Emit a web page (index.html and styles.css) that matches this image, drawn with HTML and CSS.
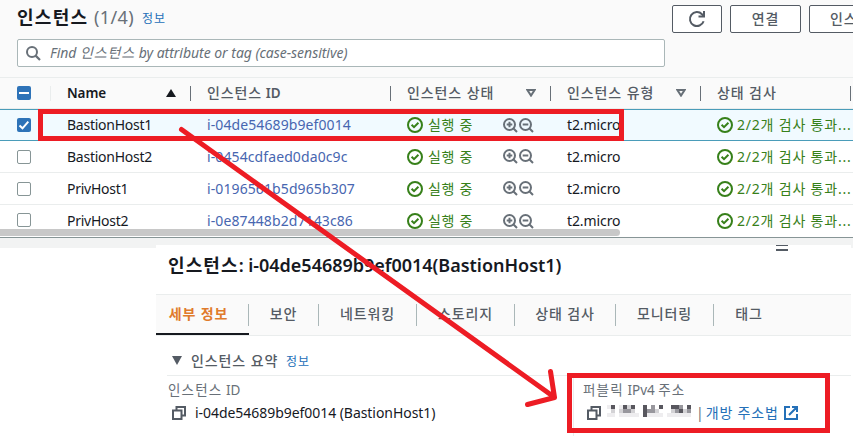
FILE: index.html
```html
<!DOCTYPE html>
<html lang="ko">
<head>
<meta charset="utf-8">
<title>인스턴스</title>
<link rel="stylesheet" href="styles.css">
</head>
<body>
<svg class="defs" width="0" height="0">
  <symbol id="ok" viewBox="0 0 16 16"><circle cx="8" cy="8" r="7" fill="none" stroke="#37801a" stroke-width="2"/><path d="M4.6 7.8 7 10.2 11.4 5.8" fill="none" stroke="#37801a" stroke-width="2"/></symbol>
  <symbol id="zin" viewBox="0 0 15 15"><circle cx="6.5" cy="6.5" r="5.5" fill="none" stroke="#687078" stroke-width="2"/><path d="M10.3 10.3 14 14M3.7 6.5h5.6M6.5 3.7v5.6" fill="none" stroke="#687078" stroke-width="2"/></symbol>
  <symbol id="zout" viewBox="0 0 15 15"><circle cx="6.5" cy="6.5" r="5.5" fill="none" stroke="#687078" stroke-width="2"/><path d="M10.3 10.3 14 14M3.7 6.5h5.6" fill="none" stroke="#687078" stroke-width="2"/></symbol>
  <symbol id="copy" viewBox="0 0 14 14"><path d="M1 4.5h8.5V13H1zM4.5 4V1H13v8.5h-3" fill="none" stroke="#545b64" stroke-width="2"/></symbol>
</svg>
<div class="screen">
  <section class="list">
    <header class="top">
      <h1><span class="t1">인스턴스</span><span class="count">(1/4)</span><span class="info">정보</span></h1>
      <div class="buttons">
        <div class="btn refresh"><svg width="18" height="18" viewBox="0 0 18 18"><path d="M15.6 11.2A7 7 0 1 1 14 4.2L16 6.2" fill="none" stroke="#545b64" stroke-width="2"/><path d="M16 1v5.5h-5.5" fill="none" stroke="#545b64" stroke-width="2"/></svg></div>
        <div class="btn connect">연결</div>
        <div class="btn state">인스턴스 상태</div>
      </div>
    </header>
    <div class="search">
      <svg width="15" height="15" viewBox="0 0 15 15"><circle cx="6" cy="6" r="5" fill="none" stroke="#687078" stroke-width="2"/><path d="M9.6 9.6 14 14" stroke="#687078" stroke-width="2.2"/></svg>
      <span class="placeholder">Find <span class="ks">인스턴스</span> by attribute or tag (case-sensitive)</span>
    </div>
    <div class="row head">
      <div class="check"><i class="box on"><svg width="14" height="14"><path d="M2 7h10" stroke="#fff" stroke-width="2"/></svg></i></div>
      <div class="cell name"><b>Name</b><svg width="10" height="8"><path d="M5 0 10 8H0z" fill="#16191f"/></svg></div>
      <div class="cell id"><span><span class="ko">인스턴스</span> <b>ID</b></span></div>
      <div class="cell status"><span class="ko">인스턴스 상태</span><svg width="10" height="8"><path d="M1.4 1h7.2L5 6.600z" fill="none" stroke="#687078" stroke-width="2"/></svg></div>
      <div class="cell type"><span class="ko">인스턴스 유형</span><svg width="10" height="8"><path d="M1.4 1h7.2L5 6.600z" fill="none" stroke="#687078" stroke-width="2"/></svg></div>
      <div class="cell test"><span class="ko">상태 검사</span></div>
    </div>
    <div class="row selected">
      <div class="check"><i class="box on"><svg width="14" height="14"><path d="M2.5 7.5 5.5 10.3 11.3 3.7" fill="none" stroke="#fff" stroke-width="2"/></svg></i></div>
      <div class="cell name">BastionHost1</div><div class="cell id">i-04de54689b9ef0014</div>
      <div class="cell status"><svg width="16" height="16"><use href="#ok"/></svg><span class="run">실행 중</span><svg class="z" width="15" height="15"><use href="#zin"/></svg><svg width="15" height="15"><use href="#zout"/></svg></div>
      <div class="cell type">t2.micro</div><div class="cell test"><svg width="16" height="16"><use href="#ok"/></svg><span class="pass">2/2개 검사 통과...</span></div>
    </div>
    <div class="row">
      <div class="check"><i class="box"></i></div>
      <div class="cell name">BastionHost2</div><div class="cell id">i-0454cdfaed0da0c9c</div>
      <div class="cell status"><svg width="16" height="16"><use href="#ok"/></svg><span class="run">실행 중</span><svg class="z" width="15" height="15"><use href="#zin"/></svg><svg width="15" height="15"><use href="#zout"/></svg></div>
      <div class="cell type">t2.micro</div><div class="cell test"><svg width="16" height="16"><use href="#ok"/></svg><span class="pass">2/2개 검사 통과...</span></div>
    </div>
    <div class="row">
      <div class="check"><i class="box"></i></div>
      <div class="cell name">PrivHost1</div><div class="cell id">i-0196561b5d965b307</div>
      <div class="cell status"><svg width="16" height="16"><use href="#ok"/></svg><span class="run">실행 중</span><svg class="z" width="15" height="15"><use href="#zin"/></svg><svg width="15" height="15"><use href="#zout"/></svg></div>
      <div class="cell type">t2.micro</div><div class="cell test"><svg width="16" height="16"><use href="#ok"/></svg><span class="pass">2/2개 검사 통과...</span></div>
    </div>
    <div class="row last">
      <div class="check"><i class="box"></i></div>
      <div class="cell name">PrivHost2</div><div class="cell id">i-0e87448b2d7143c86</div>
      <div class="cell status"><svg width="16" height="16"><use href="#ok"/></svg><span class="run">실행 중</span><svg class="z" width="15" height="15"><use href="#zin"/></svg><svg width="15" height="15"><use href="#zout"/></svg></div>
      <div class="cell type">t2.micro</div><div class="cell test"><svg width="16" height="16"><use href="#ok"/></svg><span class="pass">2/2개 검사 통과...</span></div>
    </div>
    <div class="track"><div class="thumb"></div></div>
  </section>
  <section class="detail">
    <div class="grip"></div>
    <h2><span class="h2ko">인스턴스</span>: i-04de54689b9ef0014(BastionHost1)</h2>
    <nav class="tabs">
      <div class="tab active">세부 정보</div><div class="tab w70">보안</div><div class="tab w98">네트워킹</div><div class="tab w98">스토리지</div><div class="tab w101">상태 검사</div><div class="tab w98">모니터링</div><div class="tab w70">태그</div>
    </nav>
    <div class="summary"><svg width="10" height="9"><path d="M0 0h10L5 9z" fill="#545b64"/></svg><span class="sum">인스턴스 요약</span><span class="info">정보</span></div>
    <div class="fields">
      <div class="field first">
        <div class="label"><span class="lk">인스턴스</span> ID</div>
        <div class="value"><svg width="14" height="14"><use href="#copy"/></svg><span class="iid">i-04de54689b9ef0014 (BastionHost1)</span></div>
      </div>
      <div class="field second">
        <div class="label"><span class="lk">퍼블릭</span> IPv4 <span class="lk">주소</span></div>
        <div class="value"><svg width="14" height="14"><use href="#copy"/></svg>
          <svg class="mosaic" width="86" height="12" shape-rendering="crispEdges">
            <path fill="#eeedef" d="M0 0h4v4H0zM12 0h4v4h-4zM0 8h8v4H0zM12 8h20v4H12zM40 8h16v4H40zM60 8h24v4H60z"/>
            <path fill="#d3d2d5" d="M4 4h4v4H4zM12 4h4v4h-4zM24 4h4v4h-4zM48 4h4v4h-4zM64 4h4v4h-4zM76 4h4v4h-4zM20 0h4v4h-4z"/>
            <path fill="#98979d" d="M16 4h8v4h-8zM40 4h8v4h-8zM68 4h4v4h-4zM44 0h4v4h-4zM72 0h4v4h-4zM80 4h4v4h-4z"/>
            <path fill="#58575e" d="M4 0h4v4H4zM16 0h4v4h-4zM24 0h4v4h-4zM36 0h4v12h-4zM52 0h4v4h-4zM64 0h8v4h-8zM80 0h4v4h-4zM72 4h4v4h-4z"/>
          </svg>
          <span class="bar">|</span><span class="open">개방 주소법</span>
          <svg width="14" height="14" viewBox="0 0 14 14"><path d="M6 1H1v12h12V8M8 1h5v5M13 1 5 9" fill="none" stroke="#2470b8" stroke-width="2"/></svg>
        </div>
      </div>
    </div>
  </section>
</div>
<svg class="marks" width="859" height="439" fill="none" stroke="#ed1c24" stroke-width="5">
  <path d="M40.500 111.500H621.500V138.500H40.500z M569.500 375.500H827.500V430.500H569.500z"/>
  <path d="M181.500 129.500 554 397 M550.500 371.500 554.500 397.500 527.500 404.500" stroke-linecap="round" stroke-linejoin="round"/>
</svg>
</body>
</html>
```
FILE: styles.css
```css
* { box-sizing: border-box; }
body { margin: 0; width: 859px; height: 439px; overflow: hidden; position: relative; background: #fff; color: #16191f; font: 14px/20px "Noto Sans", "Noto Sans CJK KR", sans-serif; }
svg { flex: none; display: block; }
.defs { position: absolute; }
.screen { width: 853px; height: 439px; overflow: hidden; }
.list { height: 248px; background: linear-gradient(#fafafa 0 109px, #fff 109px 237px, #879596 237px 238px, #f2f3f3 238px); }
.top { height: 39px; display: flex; justify-content: space-between; background: #fafafa; }
h1 { margin: 0; padding: 3px 0 0 17px; font-size: 18px; line-height: 28px; display: flex; white-space: nowrap; }
.t1 { letter-spacing: 1.3px; width: 77px; }
.count { font-weight: 400; color: #687078; width: 48px; letter-spacing: .4px; }
.info { font-size: 12px; font-weight: 400; color: #2470b8; letter-spacing: .9px; padding-top: 2px; }
.buttons { display: flex; width: 181px; gap: 8px; padding-top: 5px; overflow: hidden; }
.btn { flex: none; height: 28px; border: 1px solid #545b64; border-radius: 2px; background: #fff; color: #545b64; font-weight: 500; line-height: 25px; text-align: center; letter-spacing: .8px; white-space: nowrap; }
.refresh { width: 50px; display: flex; align-items: center; justify-content: center; }
.connect { width: 71px; }
.state { width: 120px; text-align: left; padding-left: 20px; }
.search { width: 648px; height: 28px; margin-left: 17px; border: 1px solid #aab7b8; border-radius: 2px; background: #fff; display: flex; align-items: center; padding-left: 8px; gap: 9px; }
.placeholder { color: #687078; font-style: italic; font-size: 14px; letter-spacing: -.03px; white-space: nowrap; }
.ks { letter-spacing: .9px; }
.row { height: 32px; display: grid; grid-template-columns: 50px 140px 200px 160px 150px 151px; align-items: center; border-bottom: 1px solid #eaeded; white-space: nowrap; }
.head { height: 32px; margin-top: 10px; border-top: 1px solid #eaeded; color: #545b64; }
.row.selected { background: #f1faff; border-top: 1px solid #4a9cb9; border-bottom: 1px solid #4a9cb9; }
.row.last { height: 24px; align-items: start; border: 0; padding-top: 6px; overflow: hidden; }
.row.last .check { padding-top: 2px; }
.check { padding-left: 17px; }
.box { display: block; width: 14px; height: 14px; border: 1px solid #879596; border-radius: 2px; background: #fff; }
.box.on { border: 0; background: #2e73b8; }
.cell { padding-left: 17px; display: flex; align-items: center; }
.head .cell { height: 15px; border-left: 1px solid #687078; padding-left: 16px; }
.head .name { border-color: #eaeded; color: #16191f; justify-content: space-between; padding-right: 14px; }
.head .test { border-right: 1px solid #687078; }
.head .status, .head .type { justify-content: space-between; padding-right: 14px; }
.head b { font-size: 13.5px; font-weight: 600; letter-spacing: -.1px; }
.ko { letter-spacing: .9px; font-weight: 500; }
.row:not(.head) .name { letter-spacing: -.25px; }
.row:not(.head) .type { letter-spacing: -.1px; }
.row:not(.head) .id { color: #4766b0; letter-spacing: .1px; }
.run { color: #37801a; letter-spacing: .7px; width: 80px; padding-left: 5px; }
.pass { color: #37801a; letter-spacing: .8px; padding-left: 4px; }
.status svg + svg { margin-left: 1px; }
.track { height: 7px; }
.thumb { width: 620px; height: 7px; background: #c8c8c8; border-radius: 0 4px 4px 0; }
.detail { width: 695px; height: 194px; margin: -3px 0 0 156px; background: #fff; position: relative; }
.grip { position: absolute; left: 620px; top: 0; width: 12px; height: 6px; border-top: 1px solid #545b64; border-bottom: 2px solid #545b64; }
h2 { margin: 0; height: 49px; padding: 8px 0 0 12px; font-size: 18px; line-height: 24px; font-weight: 600; white-space: nowrap; letter-spacing: -.02px; }
.h2ko { letter-spacing: 1.1px; }
.tabs { height: 42px; border-top: 1px solid #eaeded; border-bottom: 1px solid #eaeded; background: #fafafa; display: flex; align-items: center; }
.tab { height: 22px; line-height: 19px; text-align: center; border-right: 1px solid #aab7b8; color: #545b64; font-weight: 500; letter-spacing: .9px; white-space: nowrap; }
.tab:last-child { border: 0; }
.active { width: 93px; color: #e07b2c; font-weight: 700; height: 40px; line-height: 37px; padding-right: 8px; border-right: 0; border-bottom: 2px solid #16191f; background: linear-gradient(#aab7b8, #aab7b8) right 9px / 1px 22px no-repeat; }
.w70 { width: 70px; }
.w98 { width: 98px; }
.w101 { width: 101px; }
.summary { height: 40px; margin-left: 11px; padding: 12px 0 0 5px; border-bottom: 1px solid #eaeded; display: flex; align-items: center; color: #545b64; }
.sum { padding-left: 9px; letter-spacing: .9px; width: 104px; font-weight: 500; white-space: nowrap; }
.summary svg, .summary span { margin-bottom: 2px; }
.fields { display: grid; grid-template-columns: 417px 278px; }
.field { height: 60px; padding: 4px 0 0 12px; }
.second { padding-left: 9px; border-left: 1px solid #eaeded; }
.label { color: #687078; font-size: 13.5px; height: 22px; white-space: nowrap; }
.lk { letter-spacing: 1.2px; }
.value { display: flex; align-items: center; height: 22px; padding-left: 4px; white-space: nowrap; }
.iid { padding-left: 9px; font-size: 14px; letter-spacing: -.05px; }
.mosaic { margin: -4px 0 0 6px; }
.bar { color: #687078; padding: 0 2px 0 3px; }
.open { color: #2470b8; letter-spacing: .8px; padding-right: 5px; }
.marks { position: absolute; left: 0; top: 0; }
```
